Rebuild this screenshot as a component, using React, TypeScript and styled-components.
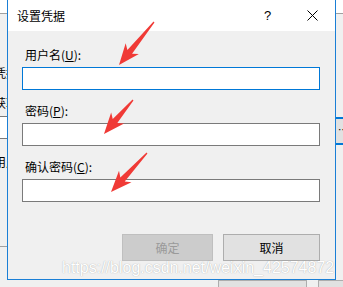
import React from "react";
import styled, { createGlobalStyle } from "styled-components";

const Global = createGlobalStyle`
  html, body { margin: 0; padding: 0; background: #f0f0f0; overflow: hidden; }
  #root { width: 343px; height: 287px; }
`;

const FONT = `"Noto Sans CJK SC", "Microsoft YaHei", "Noto Sans", sans-serif`;

const Screen = styled.div`
  position: relative;
  width: 343px;
  height: 287px;
  overflow: hidden;
  background: #f0f0f0;
  font-family: ${FONT};
`;

/* ---------- background application (mostly hidden) ---------- */
const BackApp = styled.div`
  display: grid;
  grid-template-rows: 14px 1fr 7px;
  width: 100%;
  height: 100%;
`;

const TopBand = styled.div`
  background: #ffffff;
  border-bottom: 1px solid #a0a0a0;
`;

const BackBody = styled.div`
  display: flex;
  justify-content: space-between;
  min-height: 0;
`;

const BackLeft = styled.div`
  display: flex;
  flex-direction: column;
  margin-left: -6px;
  padding-top: 51px;
  width: 60px;
`;

const BackLabel = styled.div<{ $gap: number }>`
  font-size: 12px;
  line-height: 16px;
  height: 16px;
  color: #000;
  margin-bottom: ${(p) => p.$gap}px;
  white-space: nowrap;
`;

const BackInput = styled.div`
  height: 21px;
  border: 1px solid #7a7a7a;
  background: #fff;
  margin-left: -40px;
  padding-left: 38px;
  font-family: "Liberation Sans", sans-serif;
  font-size: 13px;
  line-height: 21px;
  color: #800000;
  margin-bottom: 15px;
`;

const BackRule = styled.div`
  margin-top: 76px;
  height: 1px;
  background: #a0a0a0;
  margin-left: -20px;
`;

const BackRight = styled.div`
  display: flex;
  flex-direction: column;
  width: 12px;
  padding-top: 103px;
`;

const BackTab = styled.div`
  height: 24px;
  background: #e1e1e1;
  border-top: 2px solid #0078d7;
  border-bottom: 2px solid #0078d7;
  font-size: 10px;
  line-height: 22px;
  padding-left: 2px;
  color: #000;
`;

const BackFooter = styled.div`
  display: flex;
  gap: 11px;
  padding-left: 218px;
`;

const BgButton = styled.div<{ $w: number }>`
  width: ${(p) => p.$w}px;
  height: 27px;
  box-sizing: border-box;
  background: #e1e1e1;
  border: 1px solid #adadad;
`;

/* ---------- dialog window ---------- */
const Dialog = styled.div`
  position: absolute;
  left: 7px;
  top: -1px;
  width: 329px;
  height: 281px;
  box-sizing: border-box;
  border: 1px solid #1a7fd6;
  background: #f0f0f0;
  display: flex;
  flex-direction: column;
`;

const TitleBar = styled.div`
  height: 31px;
  flex: none;
  background: #ffffff;
  display: flex;
  align-items: center;
`;

const Title = styled.div`
  flex: 1;
  padding-left: 9px;
  font-size: 12px;
  color: #000;
  line-height: 16px;
`;

const TitleButton = styled.div`
  width: 45px;
  height: 31px;
  display: flex;
  align-items: center;
  justify-content: center;
  color: #000;
  font-family: "Liberation Sans", sans-serif;
  font-size: 13px;
`;

const Body = styled.div`
  flex: 1;
  display: flex;
  flex-direction: column;
  padding: 16px 15px 0 14px;
`;

const Field = styled.div`
  display: flex;
  flex-direction: column;
  margin-bottom: 13px;
`;

const Label = styled.div`
  font-size: 12px;
  line-height: 16px;
  height: 16px;
  padding-left: 3px;
  margin-bottom: 4px;
  color: #000;
  u { text-underline-offset: 1px; }
`;

const Input = styled.div<{ $focused?: boolean }>`
  height: 23px;
  box-sizing: border-box;
  background: #fff;
  border: 1px solid ${(p) => (p.$focused ? "#0078d7" : "#7a7a7a")};
`;

const ButtonRow = styled.div`
  display: flex;
  justify-content: flex-end;
  gap: 10px;
  margin-top: 19px;
`;

const Button = styled.div<{ $disabled?: boolean; $w: number }>`
  width: ${(p) => p.$w}px;
  height: 27px;
  box-sizing: border-box;
  display: flex;
  align-items: center;
  justify-content: center;
  font-size: 12px;
  background: ${(p) => (p.$disabled ? "#cccccc" : "#e1e1e1")};
  border: 1px solid ${(p) => (p.$disabled ? "#bfbfbf" : "#adadad")};
  color: ${(p) => (p.$disabled ? "#9a9a9a" : "#000")};
`;

/* ---------- overlays ---------- */
const Watermark = styled.div`
  position: absolute;
  left: 62px;
  top: 259px;
  font-family: "Liberation Sans", Arial, sans-serif;
  font-size: 16px;
  line-height: 18px;
  color: #ffffff;
  text-shadow: 0 0 1px rgba(90, 90, 90, 0.55);
  white-space: nowrap;
  pointer-events: none;
`;

const ArrowLayer = styled.svg`
  position: absolute;
  left: 0;
  top: 0;
  pointer-events: none;
`;

type ArrowSpec = { x1: number; y1: number; x2: number; y2: number };

const arrows: ArrowSpec[] = [
  { x1: 154, y1: 22, x2: 119, y2: 65 },
  { x1: 133, y1: 100, x2: 104, y2: 134 },
  { x1: 147, y1: 153, x2: 111, y2: 192 },
];

function Arrow({ x1, y1, x2, y2 }: ArrowSpec) {
  const dx = x2 - x1;
  const dy = y2 - y1;
  const L = Math.sqrt(dx * dx + dy * dy);
  const ang = (Math.atan2(dy, dx) * 180) / Math.PI;
  const H = 19;
  const pts = [
    [0, -0.6],
    [L - H + 2, -3],
    [L - H - 2, -8.5],
    [L, 0],
    [L - H - 2, 8.5],
    [L - H + 2, 3],
    [0, 0.6],
  ]
    .map((p) => p.join(","))
    .join(" ");
  return (
    <polygon
      points={pts}
      fill="#f03a36"
      transform={`translate(${x1} ${y1}) rotate(${ang})`}
    />
  );
}

export default function App() {
  return (
    <Screen>
      <Global />
      <BackApp>
        <TopBand />
        <BackBody>
          <BackLeft>
            <BackLabel $gap={14}>凭据：</BackLabel>
            <BackLabel $gap={5}>获取：</BackLabel>
            <BackInput>h</BackInput>
            <BackLabel $gap={0}>用户：</BackLabel>
            <BackRule />
          </BackLeft>
          <BackRight>
            <BackTab>…</BackTab>
          </BackRight>
        </BackBody>
        <BackFooter>
          <BgButton $w={89} />
          <BgButton $w={30} />
        </BackFooter>
      </BackApp>

      <Dialog>
        <TitleBar>
          <Title>设置凭据</Title>
          <TitleButton>?</TitleButton>
          <TitleButton>
            <svg width="11" height="11" viewBox="0 0 11 11">
              <path d="M0.5 0.5 L10.5 10.5 M10.5 0.5 L0.5 10.5" stroke="#000" strokeWidth="1" />
            </svg>
          </TitleButton>
        </TitleBar>
        <Body>
          <Field>
            <Label>
              用户名(<u>U</u>):
            </Label>
            <Input $focused />
          </Field>
          <Field>
            <Label>
              密码(<u>P</u>):
            </Label>
            <Input />
          </Field>
          <Field>
            <Label>
              确认密码(<u>C</u>):
            </Label>
            <Input />
          </Field>
          <ButtonRow>
            <Button $disabled $w={91}>确定</Button>
            <Button $w={97}>取消</Button>
          </ButtonRow>
        </Body>
      </Dialog>

      <ArrowLayer width="343" height="287" viewBox="0 0 343 287">
        {arrows.map((a, i) => (
          <Arrow key={i} {...a} />
        ))}
      </ArrowLayer>

      <Watermark>https://blog.csdn.net/weixin_42574872</Watermark>
    </Screen>
  );
}
